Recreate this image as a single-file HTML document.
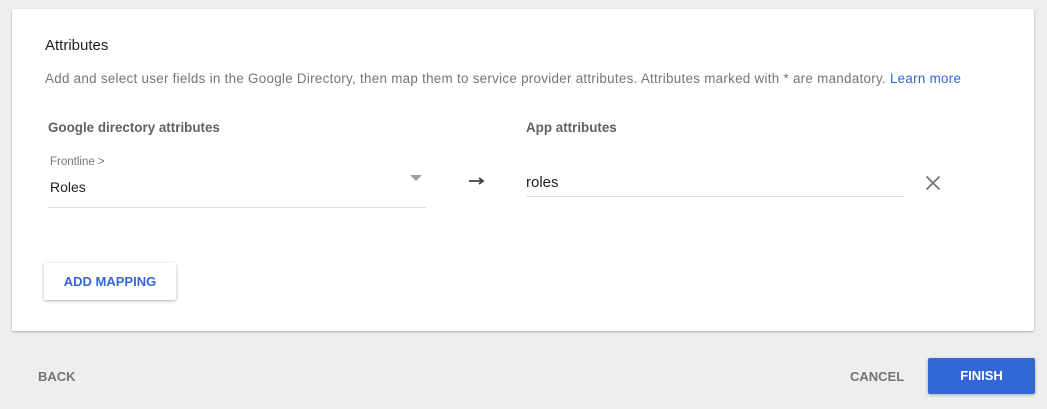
<html><head><style>
body{margin:0;width:1047px;height:409px;background:#eee;font-family:"Liberation Sans",sans-serif;position:relative;overflow:hidden}
.a{position:absolute;white-space:nowrap}
.card{position:absolute;left:12px;top:9px;width:1022px;height:322px;background:#fff;border-radius:2px;box-shadow:0 1px 2px rgba(0,0,0,.3)}
</style></head><body>
<div class="card"></div>
<div class="a" style="left:45px;top:37px;font-size:15px;color:#212121">Attributes</div>
<div class="a" style="left:45px;top:71px;font-size:13.4px;color:#757575;letter-spacing:0.28px">Add and select user fields in the Google Directory, then map them to service provider attributes. Attributes marked with * are mandatory. <span style="color:#3367d6">Learn more</span></div>
<div class="a" style="left:48px;top:120px;font-size:13.4px;color:#616161;font-weight:bold">Google directory attributes</div>
<div class="a" style="left:526px;top:120px;font-size:13.4px;color:#616161;font-weight:bold">App attributes</div>
<div class="a" style="left:50px;top:156px;font-size:11.5px;color:#757575">Frontline &gt;</div>
<div class="a" style="left:50px;top:179px;font-size:14px;color:#212121">Roles</div>
<div class="a" style="left:410px;top:175px;width:0;height:0;border-left:6px solid transparent;border-right:6px solid transparent;border-top:6px solid #9e9e9e"></div>
<div class="a" style="left:48px;top:207px;width:378px;height:1px;background:#e0e0e0"></div>
<svg class="a" style="left:468px;top:175px" width="18" height="12"><path d="M1 6H14M11 3L15 6L11 9" stroke="#424242" stroke-width="1.8" fill="none"/></svg>
<div class="a" style="left:526px;top:174px;font-size:15px;color:#212121">roles</div>
<div class="a" style="left:526px;top:196px;width:378px;height:1px;background:#e0e0e0"></div>
<svg class="a" style="left:925px;top:175px" width="16" height="16"><path d="M1.5 1.5L14.5 14.5M14.5 1.5L1.5 14.5" stroke="#757575" stroke-width="1.8"/></svg>
<div class="a" style="left:44px;top:263px;width:132px;height:37px;background:#fff;border-radius:2px;box-shadow:0 1px 3px rgba(0,0,0,.3);color:#3367d6;font-size:13px;line-height:37px;text-align:center;font-weight:bold">ADD MAPPING</div>
<div class="a" style="left:38px;top:369px;font-size:13px;color:#757575;font-weight:bold">BACK</div>
<div class="a" style="left:850px;top:369px;font-size:13px;color:#757575;font-weight:bold">CANCEL</div>
<div class="a" style="left:928px;top:358px;width:107px;height:36px;background:#3367d6;border-radius:2px;box-shadow:0 1px 3px rgba(0,0,0,.3);color:#fff;font-size:13px;line-height:36px;text-align:center;font-weight:bold">FINISH</div>
</body></html>
